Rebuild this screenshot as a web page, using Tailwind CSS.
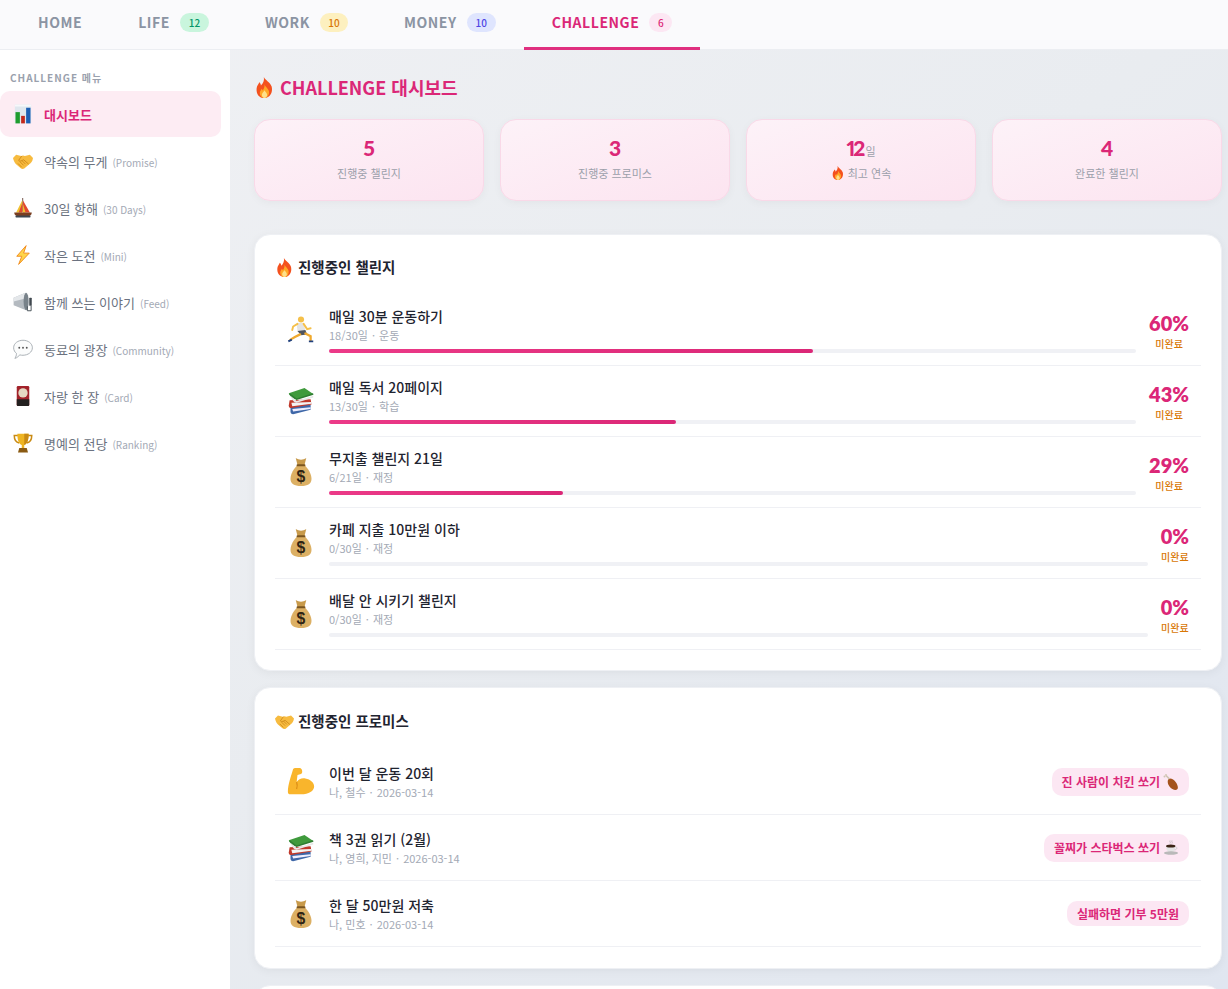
<!doctype html>
<html lang="ko"><head><meta charset="utf-8"><script src="https://cdn.jsdelivr.net/npm/@tailwindcss/browser@4"></script></head>
<body class="m-0 font-['Noto_Sans_CJK_KR','Noto_Sans',sans-serif]">
<svg class="hidden">
<symbol id="fire" viewBox="0 0 32 32"><path d="M15 0c2 5 10 8 12 15 2 9-3 17-11 17S3 26 4 17c.4-4 3-6 4-9 1.500 1 2.500 3 2.500 5C14 10 16 5 15 0z" fill="#f4511e"/><path d="M16 11c1 4 7 7 7 12 0 5-3 9-7 9s-8-4-7-9c.3-2 2-3 2.500-5 1 .5 1.500 1.500 1.700 2.500C15.500 18 16.500 14 16 11z" fill="#ffa726"/><path d="M16 20c.5 2 4 4 4 7 0 3-2 5-4 5s-4-2-4-5c0-3 3.500-5 4-7z" fill="#ffe08a"/></symbol>
<symbol id="chart" viewBox="0 0 32 32"><rect x="3" y="1" width="26" height="30" fill="#dfe7ee"/><rect x="3" y="1" width="26" height="3" fill="#f6f8fa"/><rect x="4" y="13" width="7" height="18" fill="#1f9d2e"/><rect x="13" y="19" width="6" height="12" fill="#c4281c"/><rect x="21" y="6" width="7" height="25" fill="#1d5fb4"/></symbol>
<symbol id="hands" viewBox="0 0 32 32"><path d="M0 11l5-5 8 2 3-1 3 1 8-2 5 5c-1 6-3 8-6 10l-8 7c-2 1-4 1-6-1l-7-6C3 19 1 16 0 11z" fill="#f7bb3f"/><path d="M14 8l-5 7c2 2 4 1 6 0l2-1 8 7M8 20l6 6M11 17l6 6M14 15l6 6" fill="none" stroke="#cf8a1c" stroke-width="1.500"/></symbol>
<symbol id="boat" viewBox="0 0 32 32"><path d="M15.500 0v22" stroke="#6d4c41" stroke-width="1.500"/><path d="M15 3L5 23h10z" fill="#f2c230"/><path d="M15 8L9 23h6z" fill="#e2492f"/><path d="M16 4l11 19H16z" fill="#e2492f"/><path d="M16 10l4 13h-4z" fill="#f2c230"/><path d="M2 23h28c0 4-3 6-6 6H8c-3 0-6-2-6-6z" fill="#7a3e20"/><rect x="4" y="28" width="24" height="3" rx="1" fill="#3f4750"/></symbol>
<symbol id="zap" viewBox="0 0 32 32"><path d="M21 1L6 18h8l-5 13 17-18h-9z" fill="#ffd54a" stroke="#f08a1d" stroke-width="1.500" stroke-linejoin="round"/></symbol>
<symbol id="mega" viewBox="0 0 32 32"><path d="M1 9l19-8c2 5 3 22 1 28L1 21z" fill="#b4bac0"/><path d="M1 9l19-8 1 9-20 5z" fill="#e4e7ea"/><ellipse cx="21" cy="15" rx="4" ry="14" fill="#78828a"/><rect x="26" y="9" width="4" height="13" rx="1" fill="#40484f"/><path d="M23 23v7h6v-8" fill="none" stroke="#4e575e" stroke-width="1.600"/></symbol>
<symbol id="bubble" viewBox="0 0 32 32"><path d="M16 2c8 0 15 5 15 12s-7 12-15 12c-2 0-3 0-5-.6C9 27 7 30 3 31c2-3 2.500-5 2.500-8C3 21 1 18 1 14 1 7 8 2 16 2z" fill="#fbfcfc" stroke="#a6adb2" stroke-width="1.500"/><circle cx="10" cy="14" r="1.500" fill="#555"/><circle cx="16" cy="14" r="1.500" fill="#555"/><circle cx="22" cy="14" r="1.500" fill="#555"/></symbol>
<symbol id="flower" viewBox="0 0 32 32"><rect x="6" y="0" width="20" height="32" rx="2" fill="#a2222a"/><circle cx="16" cy="11" r="7.500" fill="#e4d8c2"/><path d="M6 21h20v9a2 2 0 01-2 2H8a2 2 0 01-2-2z" fill="#23201f"/></symbol>
<symbol id="trophy" viewBox="0 0 32 32"><path d="M8 4H2c0 7 3 11 8 12M24 4h6c0 7-3 11-8 12" fill="none" stroke="#c98a13" stroke-width="2.400"/><path d="M7 1h18c0 10-2 16-7 18v5h-4v-5C9 17 7 11 7 1z" fill="#eeb422"/><path d="M18 1h7c0 10-2 16-7 18z" fill="#c98a13"/><path d="M10 24h12l2 7H8z" fill="#8a5a12"/></symbol>
<symbol id="run" viewBox="0 0 32 32"><circle cx="16" cy="4" r="3.500" fill="#f5c04a"/><path d="M11 8h8l2 9-9 1z" fill="#e4e4e4"/><path d="M12 9L7 12l-1 4M19 9l4 6 4-1" fill="none" stroke="#f5c04a" stroke-width="2.200" stroke-linecap="round"/><path d="M12 17l9-1 2 5-7 1z" fill="#4f5560"/><path d="M21 20l6 3 0 5M15 21l-6 3-5 3" fill="none" stroke="#f0a92e" stroke-width="2.600" stroke-linecap="round"/><path d="M25 28h5v2h-5zM1 28l4-2 1 2-4 2z" fill="#21407d"/></symbol>
<symbol id="books" viewBox="0 0 32 32"><path d="M4 22l23-2v6L7 31c-2 0-3-1-3-3z" fill="#3e67a8"/><path d="M6 25l21-2v2L7 28z" fill="#eef"/><path d="M3 15l24-1 1 6-23 4c-2 0-3-1-3-3z" fill="#c0392b"/><path d="M5 18l23-1v2L6 22z" fill="#f3f3f3"/><path d="M2 7l18-6 10 7-19 6C8 14 4 12 2 7z" fill="#3f9a3c"/><path d="M4 10l7 6 19-6v2l-19 6c-3 0-6-4-7-8z" fill="#e8e8e8"/><path d="M3 8l8 6 19-6" fill="none" stroke="#2e7d32" stroke-width="1.600"/></symbol>
<symbol id="bag" viewBox="0 0 32 32"><path d="M10 0c2 1 4 2 6 2s4-1 6-2l-2 8h-8z" fill="#c89a4b"/><path d="M12 8h8c4 4 8 10 8 16 0 5-4 8-12 8S4 29 4 24c0-6 4-12 8-16z" fill="#dcb064"/><rect x="11" y="7" width="10" height="2.500" rx="1" fill="#7a5520"/><text x="16" y="27" text-anchor="middle" font-size="18" font-weight="700" fill="#2f2413" font-family="Liberation Sans">$</text></symbol>
<symbol id="arm" viewBox="0 0 32 32"><path d="M7 1c3-2 9-2 10 1 1 3 0 5-2 5l-3 1-1 8c2-3 6-5 10-4 6 1 10 5 10 9 0 5-6 9-15 9H4c-2 0-3-1-3-3C1 19 5 8 7 1z" fill="#f9b52c"/><path d="M11 16c1 3 1 5 0 8" fill="none" stroke="#d98a14" stroke-width="1.300"/></symbol>
<symbol id="leg" viewBox="0 0 32 32"><path d="M12 9c5-1 10 2 14 8 4 6 5 12 2 14-3 2-11 0-15-6-4-5-5-12-1-16z" fill="#a4531d"/><path d="M13 10L6 3" stroke="#cfc4b2" stroke-width="3.500"/><circle cx="6" cy="1.800" r="1.800" fill="#cfc4b2"/><circle cx="3" cy="5" r="2" fill="#cfc4b2"/></symbol>
<symbol id="cup" viewBox="0 0 32 32"><path d="M6 12h19c0 7-3 13-9.500 13S6 19 6 12z" fill="#e4e4e4"/><ellipse cx="15.500" cy="12" rx="9.500" ry="3.200" fill="#3b2416"/><ellipse cx="16" cy="26" rx="14" ry="3.500" fill="#b9b9b9"/><path d="M25 14c4 0 4 5-2 6" fill="none" stroke="#cfcfcf" stroke-width="2"/><path d="M14 1c-2 2 2 3 0 6M18 1c-2 2 2 3 0 6" fill="none" stroke="#aaa" stroke-width="1.200"/></symbol>
</svg>
<div class="relative h-[989px] w-[1228px] overflow-hidden bg-gradient-to-br from-[#f0f1f4] via-[#e9ecf0] to-[#e0e6f0]">
<nav class="flex h-[50px] border-b border-[#eceef2] bg-[#fafafc] pl-[10px] text-[14px] font-semibold tracking-[0.56px] text-[#8b94a3]">
<a class="flex h-[50px] items-center px-7 pb-[5px]">HOME</a>
<a class="flex h-[50px] items-center gap-[10px] px-7 pb-[5px]">LIFE<span class="flex h-[19px] w-[29px] items-center justify-center rounded-full bg-[#c9f5dd] text-[10px] font-medium tracking-normal text-[#059669]">12</span></a>
<a class="flex h-[50px] items-center gap-[10px] px-7 pb-[5px]">WORK<span class="flex h-[19px] w-[28px] items-center justify-center rounded-full bg-[#fdf0bf] text-[10px] font-medium tracking-normal text-[#d97706]">10</span></a>
<a class="flex h-[50px] items-center gap-[10px] px-7 pb-[5px]">MONEY<span class="flex h-[19px] w-[29px] items-center justify-center rounded-full bg-[#dfe5fe] text-[10px] font-medium tracking-normal text-[#4f46e5]">10</span></a>
<a class="flex h-[50px] items-center gap-[10px] border-b-[3px] border-[#e0307f] px-7 pb-[2px] text-[#db2777]">CHALLENGE<span class="flex h-[19px] w-[23px] items-center justify-center rounded-full bg-[#fce7f3] text-[10px] font-medium tracking-normal">6</span></a>
</nav>
<div class="flex h-[939px]">
<aside class="w-[230px] shrink-0 bg-white text-[13px] text-[#6b7280]">
<div class="pl-[10px] pt-[20px] pb-[5px] text-[10px] leading-[16px] font-semibold tracking-[1px] text-[#9aa1ad]">CHALLENGE 메뉴</div>
<div class="flex w-[221px] flex-col gap-px">
<a class="flex h-[46px] items-center gap-[11px] rounded-[10px] bg-[#fdecf3] pl-[13px] font-semibold text-[#db2777]"><svg class="size-5"><use href="#chart"/></svg><span class="pt-[2px]">대시보드</span></a>
<a class="flex h-[46px] items-center gap-[11px] pl-[13px]"><svg class="size-5"><use href="#hands"/></svg><span class="pt-[2px]">약속의 무게<span class="ml-[5px] text-[10px] text-[#a3a9b5]">(Promise)</span></span></a>
<a class="flex h-[46px] items-center gap-[11px] pl-[13px]"><svg class="size-5"><use href="#boat"/></svg><span class="pt-[2px]">30일 항해<span class="ml-[5px] text-[10px] text-[#a3a9b5]">(30 Days)</span></span></a>
<a class="flex h-[46px] items-center gap-[11px] pl-[13px]"><svg class="size-5"><use href="#zap"/></svg><span class="pt-[2px]">작은 도전<span class="ml-[5px] text-[10px] text-[#a3a9b5]">(Mini)</span></span></a>
<a class="flex h-[46px] items-center gap-[11px] pl-[13px]"><svg class="size-5"><use href="#mega"/></svg><span class="pt-[2px]">함께 쓰는 이야기<span class="ml-[5px] text-[10px] text-[#a3a9b5]">(Feed)</span></span></a>
<a class="flex h-[46px] items-center gap-[11px] pl-[13px]"><svg class="size-5"><use href="#bubble"/></svg><span class="pt-[2px]">동료의 광장<span class="ml-[5px] text-[10px] text-[#a3a9b5]">(Community)</span></span></a>
<a class="flex h-[46px] items-center gap-[11px] pl-[13px]"><svg class="size-5"><use href="#flower"/></svg><span class="pt-[2px]">자랑 한 장<span class="ml-[5px] text-[10px] text-[#a3a9b5]">(Card)</span></span></a>
<a class="flex h-[46px] items-center gap-[11px] pl-[13px]"><svg class="size-5"><use href="#trophy"/></svg><span class="pt-[2px]">명예의 전당<span class="ml-[5px] text-[10px] text-[#a3a9b5]">(Ranking)</span></span></a>
</div>
</aside>
<main class="min-w-0 flex-1 pl-[24px] pr-[6px] pt-[23px]">
<h1 class="flex h-[28px] items-center gap-[5px] text-[18px] font-semibold text-[#db2777]"><svg class="size-[21px]"><use href="#fire"/></svg>CHALLENGE 대시보드</h1>
<div class="mt-[18px] grid grid-cols-4 gap-4 text-center">
<div class="flex h-[82px] flex-col items-center rounded-[16px] border border-[#f9d9e8] bg-gradient-to-br from-[#fdf2f8] to-[#fce4f0] pt-[14px] shadow-[0_2px_8px_rgba(0,0,0,0.04)]"><div class="font-['Lato'] text-[21px] leading-[28px] font-black text-[#db2777]">5</div><div class="mt-[3px] text-[11px] leading-[16px] text-[#9b9faa]">진행중 챌린지</div></div>
<div class="flex h-[82px] flex-col items-center rounded-[16px] border border-[#f9d9e8] bg-gradient-to-br from-[#fdf2f8] to-[#fce4f0] pt-[14px] shadow-[0_2px_8px_rgba(0,0,0,0.04)]"><div class="font-['Lato'] text-[21px] leading-[28px] font-black text-[#db2777]">3</div><div class="mt-[3px] text-[11px] leading-[16px] text-[#9b9faa]">진행중 프로미스</div></div>
<div class="flex h-[82px] flex-col items-center rounded-[16px] border border-[#f9d9e8] bg-gradient-to-br from-[#fdf2f8] to-[#fce4f0] pt-[14px] shadow-[0_2px_8px_rgba(0,0,0,0.04)]"><div class="h-[28px] font-['Lato'] text-[21px] leading-[28px] font-black text-[#db2777] tracking-[-2px] proportional-nums">12<span class="ml-[2px] font-['Noto_Sans_CJK_KR'] text-[11px] leading-none font-normal tracking-normal text-[#9b9faa]">일</span></div><div class="mt-[3px] flex items-center gap-[3px] text-[11px] leading-[16px] text-[#9b9faa]"><svg class="size-[14px]"><use href="#fire"/></svg>최고 연속</div></div>
<div class="flex h-[82px] flex-col items-center rounded-[16px] border border-[#f9d9e8] bg-gradient-to-br from-[#fdf2f8] to-[#fce4f0] pt-[14px] shadow-[0_2px_8px_rgba(0,0,0,0.04)]"><div class="font-['Lato'] text-[21px] leading-[28px] font-black text-[#db2777]">4</div><div class="mt-[3px] text-[11px] leading-[16px] text-[#9b9faa]">완료한 챌린지</div></div>
</div>

<section class="mt-[33px] h-[437px] rounded-[16px] border border-[#eef0f4] bg-white px-5 pt-[19px] shadow-[0_2px_10px_rgba(0,0,0,0.05)]">
<h2 class="flex h-[26px] items-center gap-[4px] text-[14.500px] font-semibold text-[#1f2430]"><svg class="size-[19px]"><use href="#fire"/></svg>진행중인 챌린지</h2>
<div class="mt-[15px]">
<div class="flex h-[71px] items-center gap-[13px] border-b border-[#eff0f4] px-3"><svg class="mr-px size-7 shrink-0"><use href="#run"/></svg><div class="min-w-0 flex-1 pb-[2px]"><div class="text-[14px] leading-[21px] font-medium text-[#1f2430]">매일 30분 운동하기</div><div class="text-[11px] leading-[17px] text-[#a3a9b5]">18/30일<span class="mx-[1px]"> · </span>운동</div><div class="mt-[5px] h-1 rounded-full bg-[#f0f1f5]"><div class="h-1 w-[60%] rounded-full bg-gradient-to-r from-[#ec3a88] to-[#db2777]"></div></div></div><div class="text-center"><div class="font-['Lato'] text-[20px] leading-[26px] font-extrabold text-[#db2777]">60%</div><div class="mt-[1px] text-[10px] leading-[14px] font-medium text-[#d97706]">미완료</div></div></div>
<div class="flex h-[71px] items-center gap-[13px] border-b border-[#eff0f4] px-3"><svg class="mr-px size-7 shrink-0"><use href="#books"/></svg><div class="min-w-0 flex-1 pb-[2px]"><div class="text-[14px] leading-[21px] font-medium text-[#1f2430]">매일 독서 20페이지</div><div class="text-[11px] leading-[17px] text-[#a3a9b5]">13/30일<span class="mx-[1px]"> · </span>학습</div><div class="mt-[5px] h-1 rounded-full bg-[#f0f1f5]"><div class="h-1 w-[43%] rounded-full bg-gradient-to-r from-[#ec3a88] to-[#db2777]"></div></div></div><div class="text-center"><div class="font-['Lato'] text-[20px] leading-[26px] font-extrabold text-[#db2777]">43%</div><div class="mt-[1px] text-[10px] leading-[14px] font-medium text-[#d97706]">미완료</div></div></div>
<div class="flex h-[71px] items-center gap-[13px] border-b border-[#eff0f4] px-3"><svg class="mr-px size-7 shrink-0"><use href="#bag"/></svg><div class="min-w-0 flex-1 pb-[2px]"><div class="text-[14px] leading-[21px] font-medium text-[#1f2430]">무지출 챌린지 21일</div><div class="text-[11px] leading-[17px] text-[#a3a9b5]">6/21일<span class="mx-[1px]"> · </span>재정</div><div class="mt-[5px] h-1 rounded-full bg-[#f0f1f5]"><div class="h-1 w-[29%] rounded-full bg-gradient-to-r from-[#ec3a88] to-[#db2777]"></div></div></div><div class="text-center"><div class="font-['Lato'] text-[20px] leading-[26px] font-extrabold text-[#db2777]">29%</div><div class="mt-[1px] text-[10px] leading-[14px] font-medium text-[#d97706]">미완료</div></div></div>
<div class="flex h-[71px] items-center gap-[13px] border-b border-[#eff0f4] px-3"><svg class="mr-px size-7 shrink-0"><use href="#bag"/></svg><div class="min-w-0 flex-1 pb-[2px]"><div class="text-[14px] leading-[21px] font-medium text-[#1f2430]">카페 지출 10만원 이하</div><div class="text-[11px] leading-[17px] text-[#a3a9b5]">0/30일<span class="mx-[1px]"> · </span>재정</div><div class="mt-[5px] h-1 rounded-full bg-[#f0f1f5]"></div></div><div class="text-center"><div class="font-['Lato'] text-[20px] leading-[26px] font-extrabold text-[#db2777]">0%</div><div class="mt-[1px] text-[10px] leading-[14px] font-medium text-[#d97706]">미완료</div></div></div>
<div class="flex h-[71px] items-center gap-[13px] border-b border-[#eff0f4] px-3"><svg class="mr-px size-7 shrink-0"><use href="#bag"/></svg><div class="min-w-0 flex-1 pb-[2px]"><div class="text-[14px] leading-[21px] font-medium text-[#1f2430]">배달 안 시키기 챌린지</div><div class="text-[11px] leading-[17px] text-[#a3a9b5]">0/30일<span class="mx-[1px]"> · </span>재정</div><div class="mt-[5px] h-1 rounded-full bg-[#f0f1f5]"></div></div><div class="text-center"><div class="font-['Lato'] text-[20px] leading-[26px] font-extrabold text-[#db2777]">0%</div><div class="mt-[1px] text-[10px] leading-[14px] font-medium text-[#d97706]">미완료</div></div></div>
</div>
</section>

<section class="mt-4 h-[282px] rounded-[16px] border border-[#eef0f4] bg-white px-5 pt-[20px] shadow-[0_2px_10px_rgba(0,0,0,0.05)]">
<h2 class="flex h-[26px] items-center gap-[4px] text-[14.500px] font-semibold text-[#1f2430]"><svg class="size-[19px]"><use href="#hands"/></svg>진행중인 프로미스</h2>
<div class="mt-[15px]">
<div class="flex h-[66px] items-center gap-[14px] border-b border-[#eff0f4] px-3"><svg class="size-7 shrink-0"><use href="#arm"/></svg><div class="min-w-0 flex-1"><div class="text-[14px] leading-[21px] font-medium text-[#1f2430]">이번 달 운동 20회</div><div class="text-[11px] leading-[16px] text-[#a3a9b5]">나, 철수<span class="mx-[1px]"> · </span>2026-03-14</div></div><div class="flex h-[28px] items-center gap-[3px] rounded-[10px] bg-[#fce7f3] px-[10px] text-[12px] font-semibold text-[#db2777]">진 사람이 치킨 쏘기<svg class="size-[16px]"><use href="#leg"/></svg></div></div>
<div class="flex h-[66px] items-center gap-[14px] border-b border-[#eff0f4] px-3"><svg class="size-7 shrink-0"><use href="#books"/></svg><div class="min-w-0 flex-1"><div class="text-[14px] leading-[21px] font-medium text-[#1f2430]">책 3권 읽기 (2월)</div><div class="text-[11px] leading-[16px] text-[#a3a9b5]">나, 영희, 지민<span class="mx-[1px]"> · </span>2026-03-14</div></div><div class="flex h-[28px] items-center gap-[3px] rounded-[10px] bg-[#fce7f3] px-[10px] text-[12px] font-semibold text-[#db2777]">꼴찌가 스타벅스 쏘기<svg class="size-[16px]"><use href="#cup"/></svg></div></div>
<div class="flex h-[66px] items-center gap-[14px] border-b border-[#eff0f4] px-3"><svg class="size-7 shrink-0"><use href="#bag"/></svg><div class="min-w-0 flex-1"><div class="text-[14px] leading-[21px] font-medium text-[#1f2430]">한 달 50만원 저축</div><div class="text-[11px] leading-[16px] text-[#a3a9b5]">나, 민호<span class="mx-[1px]"> · </span>2026-03-14</div></div><div class="flex h-[25px] items-center rounded-[10px] bg-[#fce7f3] px-[10px] text-[12px] font-semibold text-[#db2777]">실패하면 기부 5만원</div></div>
</div>
</section>
<section class="mt-4 h-[200px] rounded-[16px] border border-[#eef0f4] bg-white"></section>
</main>
</div>
</div>
</body></html>
